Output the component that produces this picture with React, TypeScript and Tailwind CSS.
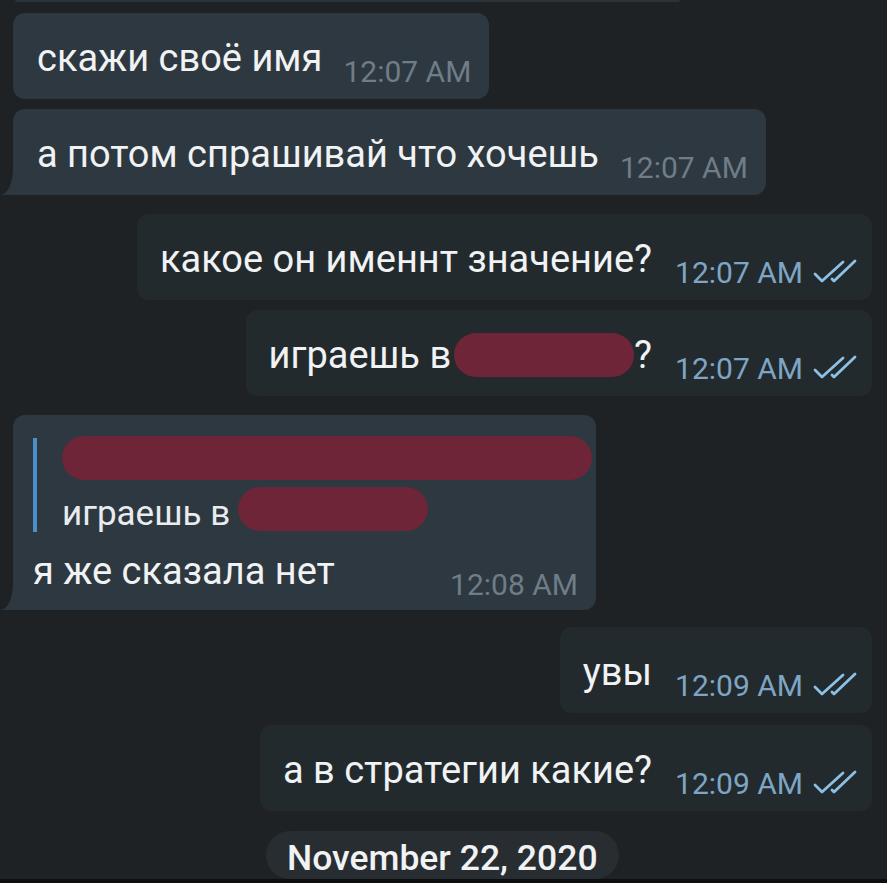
const font = { fontFamily: "Roboto, 'Noto Sans', sans-serif" };

const Checks = () => (
  <svg width="46" height="26" viewBox="0 0 46 26" fill="none" className="ml-[9px] mb-[3px] shrink-0 text-[#8cc0e4]">
    <path d="M3 15 L10 22 L31 3" stroke="currentColor" strokeWidth="2.8" strokeLinecap="round" strokeLinejoin="round" />
    <path d="M20 20 L22 22 L43 2" stroke="currentColor" strokeWidth="2.8" strokeLinecap="round" strokeLinejoin="round" />
  </svg>
);

// bubble tail, bottom-left of the last incoming message
const Tail = () => (
  <svg width="14" height="26" viewBox="0 0 14 26" className="absolute left-[-13px] bottom-0 text-[#2e3840]">
    <path d="M14 0 L13 0 A13 26 0 0 1 0 26 L14 26 Z" fill="currentColor" />
  </svg>
);

const Incoming = ({ text, time, tail = false, className = "" }: { text: string; time: string; tail?: boolean; className?: string }) => (
  <div className={`relative self-start ml-[13px] bg-[#2e3840] rounded-[12px] ${tail ? "rounded-bl-none" : ""} pl-[24px] pr-[18px] pt-[23px] pb-[12px] flex items-end ${className}`}>
    {tail && <Tail />}
    <span className="text-[38px] leading-[44px] pb-[7px] text-[#f0f2f3]">{text}</span>
    <span className="ml-[21px] text-[30px] leading-[30px] text-[#6e7d88]">{time}</span>
  </div>
);

const Outgoing = ({ children, time, className = "" }: { children: React.ReactNode; time: string; className?: string }) => (
  <div className={`self-end mr-[15px] bg-[#232a2e] rounded-[12px] pl-[23px] pr-[14px] pt-[23px] pb-[12px] flex items-end ${className}`}>
    <span className="text-[38px] leading-[44px] pb-[7px] text-[#f0f2f3] flex items-start">{children}</span>
    <span className="ml-[23px] text-[30px] leading-[30px] text-[#7ea6c4]">{time}</span>
    <Checks />
  </div>
);

const Blob = ({ className = "" }: { className?: string }) => (
  <span className={`inline-block shrink-0 bg-[#6e2537] rounded-full h-[44px] ${className}`} />
);

export default function App() {
  return (
    <div className="w-[887px] h-[883px] bg-[#1e2225] flex flex-col" style={font}>
      <div className="h-[879px] overflow-hidden flex flex-col">
        <div className="h-[3px] ml-[15px] w-[665px] bg-[#2a3339] rounded-b-[6px]" />

        <Incoming className="mt-[11px]" text="скажи своё имя" time="12:07 AM" />
        <Incoming className="mt-[10px]" tail text="а потом спрашивай что хочешь" time="12:07 AM" />

        <Outgoing className="mt-[19px]" time="12:07 AM">какое он именнт значение?</Outgoing>
        <Outgoing className="mt-[10px]" time="12:07 AM">
          играешь в
          <Blob className="w-[180px] ml-[3px]" />
          ?
        </Outgoing>

        {/* reply */}
        <div className="relative self-start ml-[13px] mt-[19px] w-[583px] bg-[#2e3840] rounded-[12px] rounded-bl-none pl-[20px] pr-[18px] pt-[21px] pb-[10px]">
          <Tail />
          <div className="flex">
            <div className="w-[4px] shrink-0 bg-[#4a8fc9] mt-[2px] mb-[4px]" />
            <div className="ml-[25px] flex flex-col gap-[7px]">
              <Blob className="w-[530px]" />
              <div className="flex items-start">
                <span className="text-[35px] leading-[44px] pt-[5px] text-[#e9ecee]">играешь в</span>
                <Blob className="w-[190px] ml-[8px]" />
              </div>
            </div>
          </div>
          <div className="mt-[13px] flex items-end justify-between">
            <span className="text-[38px] leading-[44px] pb-[7px] text-[#f0f2f3]">я же сказала нет</span>
            <span className="text-[30px] leading-[30px] text-[#6e7d88]">12:08 AM</span>
          </div>
        </div>

        <Outgoing className="mt-[17px]" time="12:09 AM">увы</Outgoing>
        <Outgoing className="mt-[12px]" time="12:09 AM">а в стратегии какие?</Outgoing>

        <div className="self-start ml-[266px] mt-[20px] bg-[#282d31] rounded-[28px] px-[21px] pt-[7px] h-[60px]">
          <span className="text-[35.5px] leading-[40px] font-medium text-[#f0f2f3]">November 22, 2020</span>
        </div>
      </div>
      <div className="h-[4px] bg-[#0c0e0f]" />
    </div>
  );
}
